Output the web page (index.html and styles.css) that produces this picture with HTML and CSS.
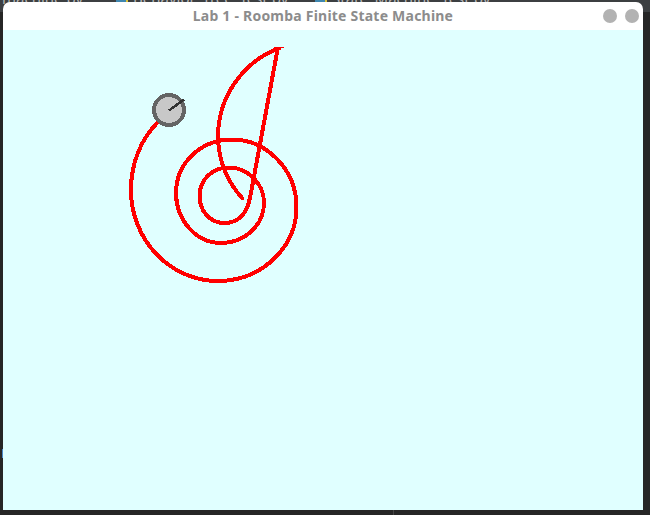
FILE: index.html
```html
<!DOCTYPE html>
<html lang="en">
<head>
<meta charset="utf-8">
<title>Lab 1 - Roomba Finite State Machine</title>
<link rel="stylesheet" href="styles.css">
</head>
<body>
<div class="tabs">
  <span class="tab tab-first">machine.py</span>
  <span class="tab tab-second"><i class="py"></i>Behavior_Tree_Test.py</span>
  <span class="tab tab-third"><i class="py"></i>State_Machine_Test.py</span>
</div>
<i class="marker"></i>
<i class="divider"></i>
<main class="window">
  <header class="titlebar">
    <h1 class="title">Lab 1 - Roomba Finite State Machine</h1>
    <div class="controls"><i class="dot"></i><i class="dot"></i></div>
  </header>
  <svg class="canvas" width="640" height="480" viewBox="3 30 640 480" shape-rendering="crispEdges">
    <g class="trail">
      <path d="M242 198A95 95 0 0 1 218 137A95 95 0 0 1 278 48.500"/>
      <path class="straight" d="M278 47L250 198"/>
      <path d="M250 197C248 212 239 223 224.500 223C210 223 199.500 211 199.500 196C199.500 180 212 167.500 229 167.500C248 167.500 264 184 264 203C264 225 245 243 221 243C196 243 176 220 176 193C176 163 201 139.500 232 139.500C267 139.500 296.500 170 296.500 207C296.500 248 261 281 218 281C170 281 131 240 131 190C131 163 141 139 158 122"/>
      <path class="tip" d="M274 48H281M241 198.500H244"/>
      <path class="point" d="M280 47.500H284"/>
    </g>
    <circle class="robot" cx="169" cy="110" r="15"/>
    <path class="heading" d="M169 110.500L184 99.500"/>
  </svg>
</main>
</body>
</html>
```
FILE: styles.css
```css
body {
  margin: 0;
  width: 650px;
  height: 515px;
  overflow: hidden;
  position: relative;
  background: linear-gradient(#3c3f41 0 12px, #262626 12px);
}

.tabs {
  position: absolute;
  inset: 0 0 auto;
  height: 12px;
  overflow: hidden;
  color: #b8b8b8;
  font: 15px/18px "Noto Sans", sans-serif;
}

.tab {
  position: absolute;
  top: -11px;
  white-space: nowrap;
}

.tab-first { left: 2px; }
.tab-second { left: 116px; }
.tab-third { left: 315px; }

.py {
  display: inline-block;
  width: 12px;
  height: 12px;
  margin-right: 5px;
  border-radius: 4px;
  background: linear-gradient(90deg, #3f87b0 80%, #d8c23c 80%);
  vertical-align: -2px;
}

.marker {
  position: absolute;
  left: 2px;
  top: 449px;
  width: 1px;
  height: 9px;
  background: #4a88c7;
}

.divider {
  position: absolute;
  left: 393px;
  top: 510px;
  width: 1px;
  height: 5px;
  background: #444;
}

.window {
  position: relative;
  width: 640px;
  margin: 2px 0 0 3px;
  border-radius: 7px 7px 0 0;
  overflow: hidden;
  background: #fff;
}

.titlebar {
  display: grid;
  grid-template-columns: 1fr auto 1fr;
  align-items: center;
  height: 28px;
}

.title {
  grid-column: 2;
  margin: 0;
  color: #8c8c8c;
  font: bold 14px/28px "Noto Sans", sans-serif;
  letter-spacing: 0.22px;
  white-space: nowrap;
}

.controls {
  display: flex;
  justify-content: flex-end;
  gap: 8px;
  padding-right: 4px;
}

.dot {
  width: 14px;
  height: 14px;
  border-radius: 50%;
  background: #b2b2b2;
}

.canvas {
  display: block;
  background: #e0ffff;
}

.trail {
  fill: none;
  stroke: #f00;
  stroke-width: 4;
}

.trail .tip { stroke-width: 3; }
.trail .point { stroke-width: 1; }

.robot {
  fill: #c8c8c8;
  stroke: #646464;
  stroke-width: 4;
}

.heading {
  stroke: #323232;
  stroke-width: 2.5;
}
```
